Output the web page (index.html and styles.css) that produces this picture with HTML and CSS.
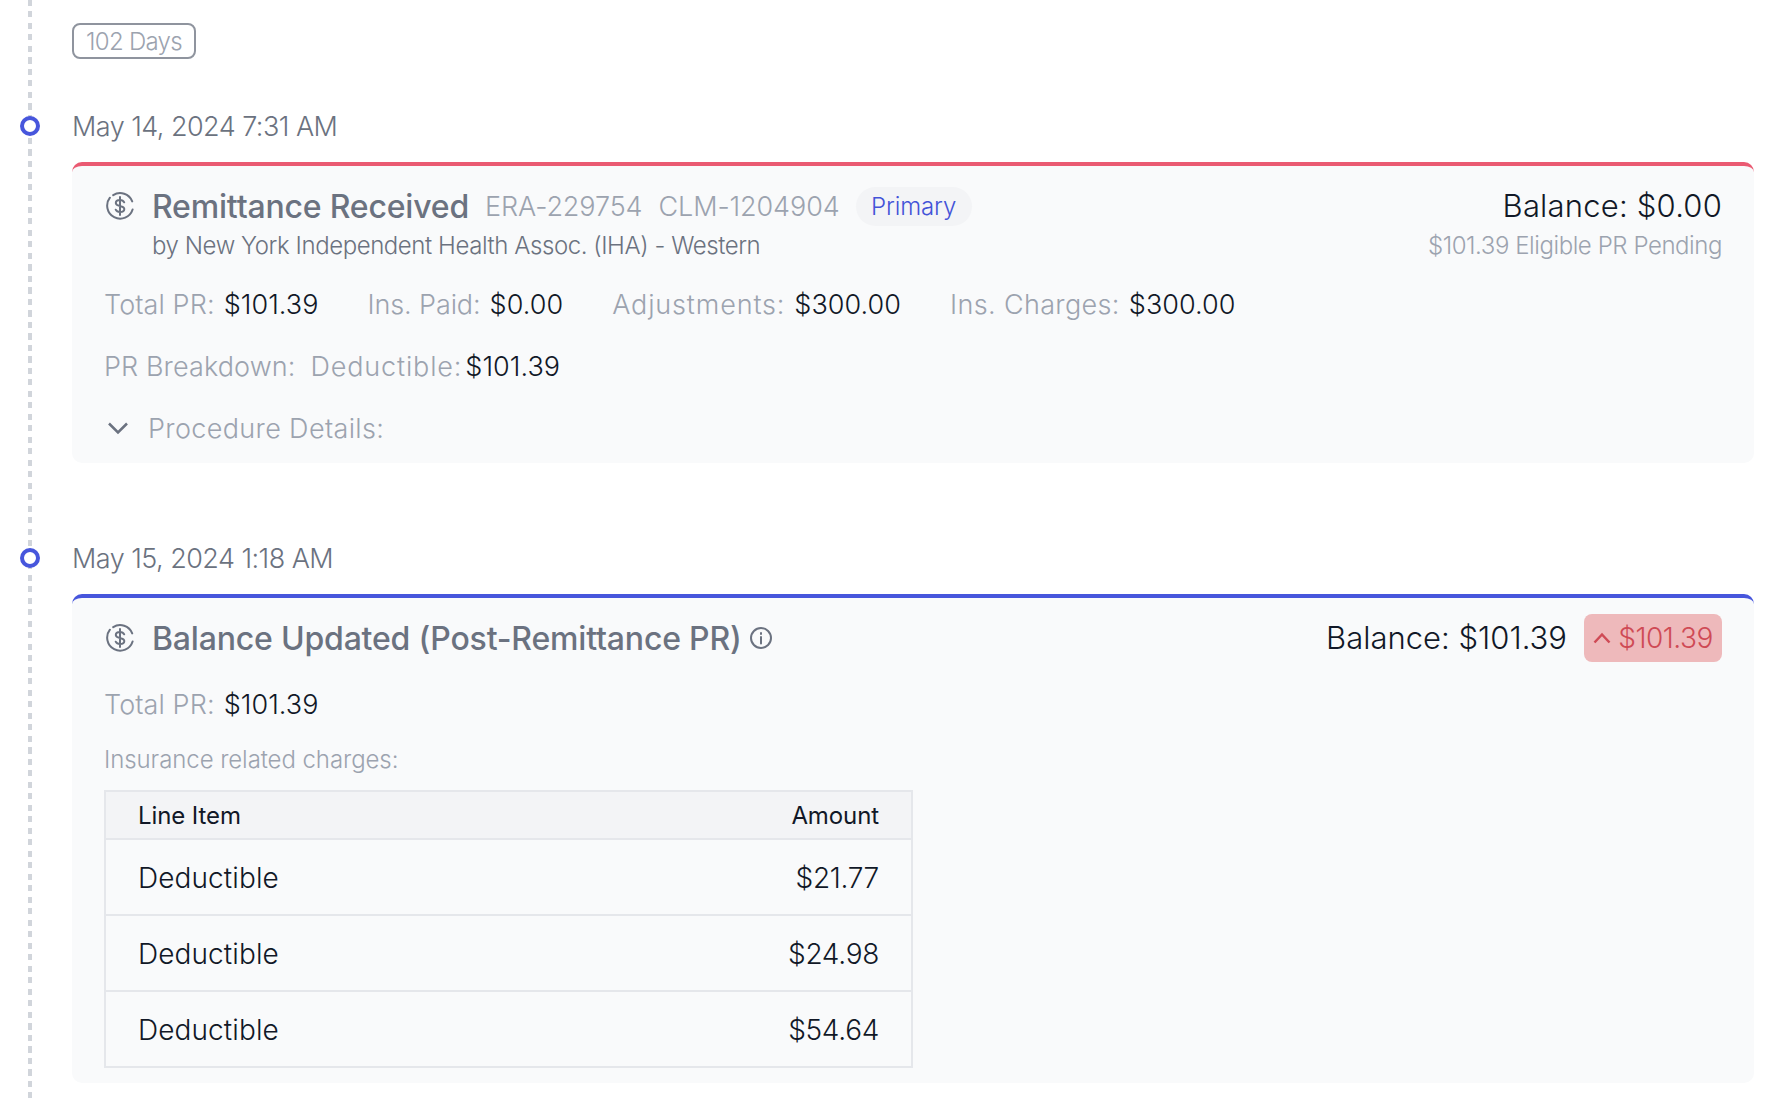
FILE: index.html
```html
<!DOCTYPE html>
<html lang="en">
<head>
<meta charset="utf-8">
<title>Timeline</title>
<link rel="stylesheet" href="styles.css">
</head>
<body>
<main class="timeline">
  <span class="days">102 Days</span>

  <section class="event first">
    <div class="date"><i class="dot"></i>May 14, 2024 7:31 AM</div>
    <article class="card red">
      <header class="head">
        <div class="head-left">
          <svg class="coin" viewBox="0 0 28 28"><path d="M7.2 3.1A13 13 0 0 1 26.2 9.4M26.6 17.5A13 13 0 1 1 3.9 5.7"/><path d="M18.2 10.3c-.7-1.500-2.300-2.400-4.200-2.400-2.400 0-4.200 1.300-4.200 3.100s1.700 2.500 4.200 3 4.300 1.300 4.300 3.100-1.900 3-4.300 3c-2 0-3.600-.9-4.300-2.400M14 5v18"/></svg>
          <div>
            <div class="title-line">
              <h2 class="title">Remittance Received</h2>
              <span class="ref">ERA-229754</span>
              <span class="ref">CLM-1204904</span>
              <span class="tag">Primary</span>
            </div>
            <div class="by">by New York Independent Health Assoc. (IHA) - Western</div>
          </div>
        </div>
        <div class="head-right">
          <div class="balance">Balance: $0.00</div>
          <div class="pending">$101.39 Eligible PR Pending</div>
        </div>
      </header>
      <div class="row stats">
        <span class="pair"><span class="label plain">Total PR:</span><span class="value">$101.39</span></span>
        <span class="pair"><span class="label narrow">Ins. Paid:</span><span class="value">$0.00</span></span>
        <span class="pair"><span class="label wide">Adjustments:</span><span class="value">$300.00</span></span>
        <span class="pair"><span class="label">Ins. Charges:</span><span class="value">$300.00</span></span>
      </div>
      <div class="row breakdown">
        <span class="label plain">PR Breakdown:</span>
        <span class="pair"><span class="label wide">Deductible:</span><span class="value">$101.39</span></span>
      </div>
      <div class="row procedure">
        <svg class="chev" viewBox="0 0 22 14"><path d="M2 2.500l9 9 9-9"/></svg>
        <span class="label">Procedure Details:</span>
      </div>
    </article>
  </section>

  <section class="event">
    <div class="date"><i class="dot"></i>May 15, 2024 1:18 AM</div>
    <article class="card blue">
      <header class="head head-center">
        <div class="head-left center">
          <svg class="coin" viewBox="0 0 28 28"><path d="M7.2 3.1A13 13 0 0 1 26.2 9.4M26.6 17.5A13 13 0 1 1 3.9 5.7"/><path d="M18.2 10.3c-.7-1.500-2.300-2.400-4.200-2.400-2.400 0-4.200 1.300-4.200 3.100s1.700 2.500 4.200 3 4.300 1.300 4.300 3.100-1.900 3-4.300 3c-2 0-3.600-.9-4.300-2.400M14 5v18"/></svg>
          <h2 class="title">Balance Updated (Post-Remittance PR)</h2>
          <svg class="info" viewBox="0 0 24 24"><circle cx="12" cy="12" r="10"/><path d="M12 11v6.500M12 7v1"/></svg>
        </div>
        <div class="head-right inline">
          <div class="balance tight">Balance: $101.39</div>
          <div class="delta"><svg class="up" viewBox="0 0 18 12"><path d="M1.500 10.500l7.500-8 7.500 8"/></svg>$101.39</div>
        </div>
      </header>
      <div class="row total">
        <span class="pair"><span class="label plain">Total PR:</span><span class="value">$101.39</span></span>
      </div>
      <div class="note">Insurance related charges:</div>
      <table class="items">
        <thead><tr><th>Line Item</th><th>Amount</th></tr></thead>
        <tbody>
          <tr><td>Deductible</td><td>$21.77</td></tr>
          <tr><td>Deductible</td><td>$24.98</td></tr>
          <tr><td>Deductible</td><td>$54.64</td></tr>
        </tbody>
      </table>
    </article>
  </section>
</main>
</body>
</html>
```
FILE: styles.css
```css
* { box-sizing: border-box; }
html, body { margin: 0; height: 100%; }
body {
  background: #fff;
  font-family: Inter, "Noto Sans", sans-serif;
  font-weight: 350;
  overflow: hidden;
  color: #111827;
}
.timeline {
  position: relative;
  padding: 23px 32px 0 72px;
  height: 1098px;
}
.timeline::before {
  content: "";
  position: absolute;
  left: 28px;
  top: 0;
  bottom: 0;
  width: 4px;
  background: repeating-linear-gradient(to bottom, #d1d5db 0 6px, transparent 6px 11.500px);
}
.days {
  display: block;
  width: 124px;
  height: 36px;
  border: 2px solid #8f949e;
  border-radius: 8px;
  color: #9ca3af;
  font-size: 24px;
  line-height: 34px;
  text-align: center;
  letter-spacing: -0.7px;
}
.event { margin-top: 75px; }
.event.first { margin-top: 47px; }
.date {
  position: relative;
  height: 40px;
  line-height: 41px;
  font-size: 27px;
  color: #6b7280;
  letter-spacing: -0.54px;
}
.dot {
  position: absolute;
  left: -52px;
  top: 10px;
  width: 20px;
  height: 20px;
  border: 4px solid #4756dc;
  border-radius: 50%;
  background: #fff;
}
.card {
  margin-top: 16px;
  background: #f9fafb;
  border-top: 4px solid;
  border-radius: 10px;
  padding: 20px 32px 15px;
}
.card.red { border-color: #ea5a72; }
.card.blue { border-color: #4756dc; padding-top: 16px; }
.head { display: flex; justify-content: space-between; align-items: flex-start; }
.head-center { align-items: center; height: 48px; }
.head-left { display: flex; gap: 18px; align-items: flex-start; }
.head-left.center { align-items: center; }
.coin { width: 28px; height: 28px; margin: 6px 0 0 2px; flex: none; fill: none; stroke: #6b7280; stroke-width: 2; stroke-linecap: round; }
.center .coin { margin-top: 0; }
.title-line { display: flex; align-items: center; gap: 16px; height: 40px; }
.title { margin: 0; font-size: 32px; font-weight: 450; color: #6b7280; line-height: 41px; letter-spacing: -0.19px; }
.ref { font-size: 27px; color: #9ca3af; letter-spacing: -0.1px; }
.tag {
  height: 39px;
  line-height: 39px;
  width: 116px;
  text-align: center;
  border-radius: 20px;
  background: #f3f4f6;
  color: #4353d8;
  font-size: 24px;
  letter-spacing: -0.1px;
}
.by { font-size: 24px; line-height: 40px; color: #6b7280; letter-spacing: -0.43px; }
.head-right { text-align: right; }
.head-right.inline { display: flex; align-items: center; gap: 17px; }
.balance { font-size: 31px; line-height: 40px; color: #111827; letter-spacing: 0.2px; }
.balance.tight { letter-spacing: 0; }
.pending { font-size: 24px; line-height: 40px; color: #9ca3af; letter-spacing: -0.43px; }
.delta {
  display: flex;
  align-items: center;
  gap: 7px;
  width: 138px;
  height: 48px;
  justify-content: center;
  background: #eeb9bb;
  border-radius: 8px;
  color: #cf4a55;
  font-size: 28px;
  letter-spacing: -0.5px;
}
.up { width: 18px; height: 12px; fill: none; stroke: #cf4a55; stroke-width: 2.500; }
.info { width: 24px; height: 24px; margin-left: -11px; fill: none; stroke: #6b7280; stroke-width: 2; stroke-linecap: round; }
.row { display: flex; align-items: center; height: 40px; font-size: 27px; margin-top: 22px; }
.stats { margin-top: 18px; gap: 49px; }
.breakdown { gap: 15px; }
.breakdown .pair { gap: 3px; }
.procedure { gap: 19px; }
.total { margin-top: 22px; }
.pair { display: flex; gap: 9px; }
.label { color: #9ca3af; letter-spacing: 0.35px; }
.label.plain { letter-spacing: 0.1px; }
.label.narrow { letter-spacing: -0.1px; }
.label.wide { letter-spacing: 0.85px; }
.value { color: #111827; letter-spacing: 0.05px; }
.chev { width: 22px; height: 14px; margin-left: 3px; fill: none; stroke: #6b7280; stroke-width: 2.500; }
.note { margin-top: 16px; font-size: 24px; line-height: 40px; color: #9ca3af; letter-spacing: -0.08px; }
.items {
  margin-top: 10px;
  width: 809px;
  border-collapse: collapse;
  border: 2px solid #e5e7eb;
  table-layout: fixed;
}
.items th, .items td { padding: 0 32px; text-align: left; color: #111827; }
.items th:last-child, .items td:last-child { text-align: right; }
.items th { height: 48px; font-size: 24px; font-weight: 400; background: #f3f4f6; border-bottom: 2px solid #e5e7eb; letter-spacing: -0.1px; }
.items td { height: 76px; padding-top: 2px; font-size: 28px; border-bottom: 2px solid #e5e7eb; letter-spacing: 0.1px; }
.items td:last-child { letter-spacing: -0.3px; }
```
